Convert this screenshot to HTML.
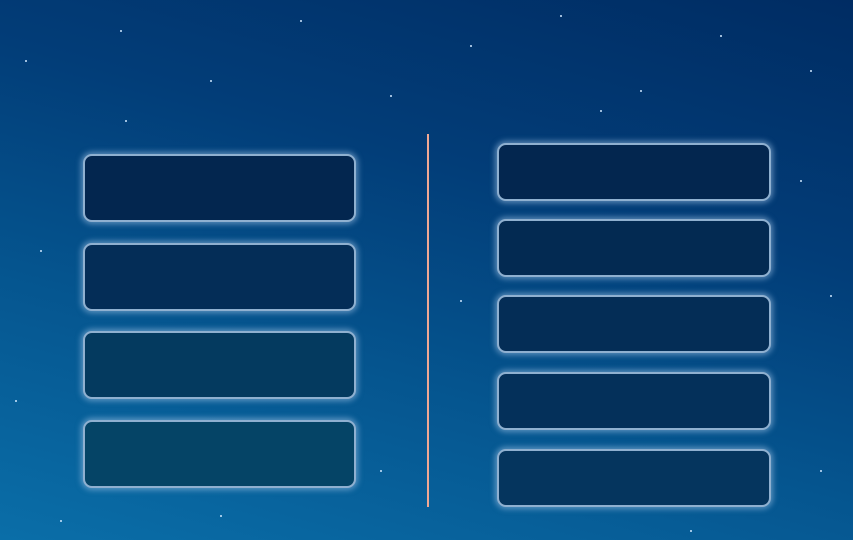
<!DOCTYPE html>
<html><head><meta charset="utf-8"><style>
html,body{margin:0;padding:0}
body{width:853px;height:540px;overflow:hidden;position:relative;
background:linear-gradient(195deg,#002c63 0%,#023d78 35%,#05558f 65%,#0a6ea8 100%);}
.b{position:absolute;box-sizing:border-box;border:2px solid #8fb0d0;border-radius:9px;
box-shadow:0 0 6px 2px rgba(160,195,230,.55);}
.l{left:83px;width:273px;height:68px}
.r{left:497px;width:274px;height:58px}
.line{position:absolute;left:427px;top:134px;width:2px;height:373px;background:#f0a894}
.s{position:absolute;width:2px;height:2px;background:#cfe8ff;border-radius:1px}
</style></head><body>
<div class="b l" style="top:154px;background:#03264f"></div>
<div class="b l" style="top:243px;background:#042d57"></div>
<div class="b l" style="top:331px;background:#043a5f"></div>
<div class="b l" style="top:420px;background:#054466"></div>
<div class="line"></div>
<div class="b r" style="top:143px;background:#03264f"></div>
<div class="b r" style="top:219px;background:#032a52"></div>
<div class="b r" style="top:295px;background:#042d56"></div>
<div class="b r" style="top:372px;background:#04305a"></div>
<div class="b r" style="top:449px;background:#05355e"></div>
<div class="s" style="left:25px;top:60px"></div><div class="s" style="left:120px;top:30px"></div>
<div class="s" style="left:210px;top:80px"></div><div class="s" style="left:300px;top:20px"></div>
<div class="s" style="left:390px;top:95px"></div><div class="s" style="left:470px;top:45px"></div>
<div class="s" style="left:560px;top:15px"></div><div class="s" style="left:640px;top:90px"></div>
<div class="s" style="left:720px;top:35px"></div><div class="s" style="left:810px;top:70px"></div>
<div class="s" style="left:830px;top:295px"></div><div class="s" style="left:800px;top:180px"></div>
<div class="s" style="left:40px;top:250px"></div><div class="s" style="left:15px;top:400px"></div>
<div class="s" style="left:60px;top:520px"></div><div class="s" style="left:220px;top:515px"></div>
<div class="s" style="left:380px;top:470px"></div><div class="s" style="left:460px;top:300px"></div>
<div class="s" style="left:690px;top:530px"></div><div class="s" style="left:820px;top:470px"></div>
<div class="s" style="left:125px;top:120px"></div><div class="s" style="left:600px;top:110px"></div>
</body></html>
